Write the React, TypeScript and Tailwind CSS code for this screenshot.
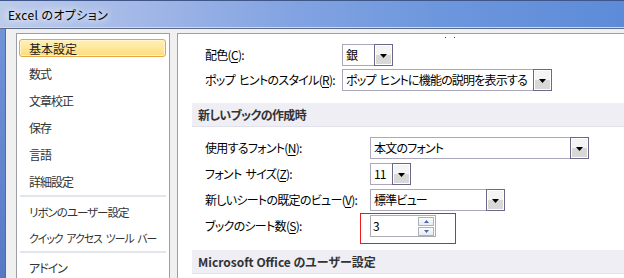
import React from "react";

const FONT =
  "font-['Noto_Sans_CJK_JP','Noto_Sans',sans-serif] [font-feature-settings:'palt']";

function T({ s }: { s: string }) {
  const parts = s.split(" ");
  return (
    <>
      {parts.map((p, i) => (
        <React.Fragment key={i}>
          {i > 0 && <span className="inline-block w-[4px]" />}
          {p}
        </React.Fragment>
      ))}
    </>
  );
}

function Arrow() {
  return (
    <svg width="7" height="4" viewBox="0 0 7 4">
      <path d="M0 0H7L3.5 4Z" fill="#000" />
    </svg>
  );
}

function Combo({ w, text }: { w: string; text: string }) {
  return (
    <div className={`flex h-[22px] shrink-0 ${w}`}>
      <div className="flex-1 flex items-center pl-[3px] border border-r-0 border-[#aca8bc] bg-white text-black overflow-hidden whitespace-nowrap tracking-[-0.8px]">
        <T s={text} />
      </div>
      <div className="w-[19px] border border-[#6c6688] bg-linear-to-b from-[#f4f4f4] from-50% to-[#d8d8d6] to-50% shadow-[inset_0_0_0_1px_#fff] flex items-center justify-center pt-[1px]">
        <Arrow />
      </div>
    </div>
  );
}

function Row({
  label,
  k,
  labelW,
  children,
}: {
  label: string;
  k: string;
  labelW: string;
  children: React.ReactNode;
}) {
  return (
    <div className="flex items-center h-[22px]">
      <div
        className={`${labelW} shrink-0 text-black whitespace-nowrap tracking-[-0.7px]`}
      >
        <T s={label} />(<span className="underline underline-offset-2">{k}</span>):
      </div>
      {children}
    </div>
  );
}

function MenuItem({
  text,
  selected,
  small,
  squeeze,
}: {
  text: string;
  selected?: boolean;
  small?: boolean;
  squeeze?: boolean;
}) {
  if (selected) {
    return (
      <div className="h-[24px] ml-[2px] mr-[3px] mt-[5px] flex items-center pl-[9px] rounded-[3px] border border-[#e3a642] bg-linear-to-b from-[#fff0b8] to-[#ffdc78] shadow-[inset_0_0_0_1px_#fff4cc] text-[#222] whitespace-nowrap">
        <span className="translate-y-[1px]">{text}</span>
      </div>
    );
  }
  return (
    <div
      className={`h-[24px] ml-[2px] mr-[3px] flex items-center pl-[10px] text-[#333] whitespace-nowrap tracking-[-1px] ${
        small ? "text-[11.5px]" : ""
      }`}
    >
      <span
        className={`inline-block origin-left ${
          squeeze ? "translate-y-[2px] scale-x-[0.94]" : "translate-y-[2px]"
        }`}
      >
        <T s={text} />
      </span>
    </div>
  );
}

function Sep() {
  return <div className="h-[2px] mx-[3px] bg-[#e2e6ec]" />;
}

export default function App() {
  return (
    <div
      className={`w-[624px] h-[278px] overflow-hidden flex flex-col text-[12px] leading-none ${FONT}`}
    >
      {/* title bar */}
      <div className="h-[27px] shrink-0 border-t border-[#3f5689] bg-[linear-gradient(90deg,#bccbea_0%,#a3b8e7_22%,#84a4e2_45%,#6d97dd_70%,#5d8bd8_100%)] flex items-center pl-[8px]">
        <span className="text-[12px] text-black [text-shadow:0_0_6px_#fff,0_0_10px_#fff] tracking-[0.4px] translate-y-[1px]">
          Excel のオプション
        </span>
      </div>
      <div className="h-[1px] shrink-0 bg-[#cfdaef]" />
      <div className="h-[1px] shrink-0 bg-[#5d6b88]" />
      <div className="flex-1 flex min-h-0">
        <div className="w-[5px] shrink-0 bg-linear-to-b from-[#7094d8] to-[#5679c6]" />
        <div className="w-[1px] shrink-0 bg-[#5d6b88]" />
        <div className="flex-1 bg-[#f0f0f0] flex pt-[4px] pl-[10px] gap-[7px] min-w-0">
          {/* left list */}
          <div className="w-[154px] shrink-0 border border-[#9c9fa6] border-b-0 bg-white flex flex-col overflow-hidden">
            <MenuItem text="基本設定" selected />
            <div className="flex flex-col gap-[3px] mt-[3px]">
              <MenuItem text="数式" />
              <MenuItem text="文章校正" />
              <MenuItem text="保存" />
              <MenuItem text="言語" />
              <MenuItem text="詳細設定" />
            </div>
            <div className="mt-[3px]">
              <Sep />
            </div>
            <div className="flex flex-col gap-[2px] mt-[2px]">
              <MenuItem text="リボンのユーザー設定" small />
              <MenuItem text="クイック アクセス ツール バー" small squeeze />
            </div>
            <div className="mt-[2px]">
              <Sep />
            </div>
            <div className="mt-[1px]">
              <MenuItem text="アドイン" />
            </div>
          </div>
          {/* right panel */}
          <div className="relative w-[470px] shrink-0 border-l border-t border-[#9c9fa6] bg-white flex flex-col">
            <span className="absolute left-[267px] top-[3px] w-[1px] h-[1px] bg-[#444]" />
            <span className="absolute left-[276px] top-[3px] w-[1px] h-[1px] bg-[#444]" />
            <div className="pl-[27px] pt-[10px] flex flex-col gap-[3px]">
              <Row label="配色" k="C" labelW="w-[137px]">
                <Combo w="w-[51px]" text="銀" />
              </Row>
              <Row label="ポップ ヒントのスタイル" k="R" labelW="w-[137px]">
                <Combo w="w-[210px]" text="ポップ ヒントに機能の説明を表示する" />
              </Row>
            </div>
            <div className="ml-[14px] mt-[12px] h-[24px] bg-[#eeeef4] border-b border-[#e1e1ea] flex items-center pl-[6px] font-bold text-[#333] tracking-[-0.6px]">
              新しいブックの作成時
            </div>
            <div className="pl-[27px] mt-[10px] flex flex-col gap-[4px]">
              <Row label="使用するフォント" k="N" labelW="w-[165px]">
                <Combo w="w-[219px]" text="本文のフォント" />
              </Row>
              <Row label="フォント サイズ" k="Z" labelW="w-[165px]">
                <Combo w="w-[41px]" text="11" />
              </Row>
              <Row label="新しいシートの既定のビュー" k="V" labelW="w-[165px]">
                <Combo w="w-[135px]" text="標準ビュー" />
              </Row>
              <Row label="ブックのシート数" k="S" labelW="w-[165px]">
                <div className="relative w-[66px] h-[22px] shrink-0 border border-[#abadb3] bg-white flex items-center">
                  <div className="flex-1 pl-[2px] text-black">3</div>
                  <div className="flex flex-col gap-[1px] pr-[1px]">
                    <div className="w-[16px] h-[9px] border border-[#a9b3c6] bg-linear-to-b from-[#fbfcfd] to-[#e6ebf2] flex items-center justify-center">
                      <svg width="5" height="3" viewBox="0 0 5 3">
                        <path d="M2.5 0L5 3H0Z" fill="#4b68a6" />
                      </svg>
                    </div>
                    <div className="w-[16px] h-[9px] border border-[#a9b3c6] bg-linear-to-b from-[#fbfcfd] to-[#e6ebf2] flex items-center justify-center">
                      <svg width="5" height="3" viewBox="0 0 5 3">
                        <path d="M0 0H5L2.5 3Z" fill="#4b68a6" />
                      </svg>
                    </div>
                  </div>
                  <div className="absolute left-[-11px] top-[-3px] w-[96px] h-[31px] border border-[#ec1c1c] pointer-events-none" />
                </div>
              </Row>
            </div>
            <div className="ml-[14px] mt-[13px] h-[24px] shrink-0 bg-[#eeeef4] border-b border-[#e1e1ea] flex items-center pl-[6px] font-bold text-[#333]">
              Microsoft Office のユーザー設定
            </div>
          </div>
        </div>
      </div>
    </div>
  );
}
